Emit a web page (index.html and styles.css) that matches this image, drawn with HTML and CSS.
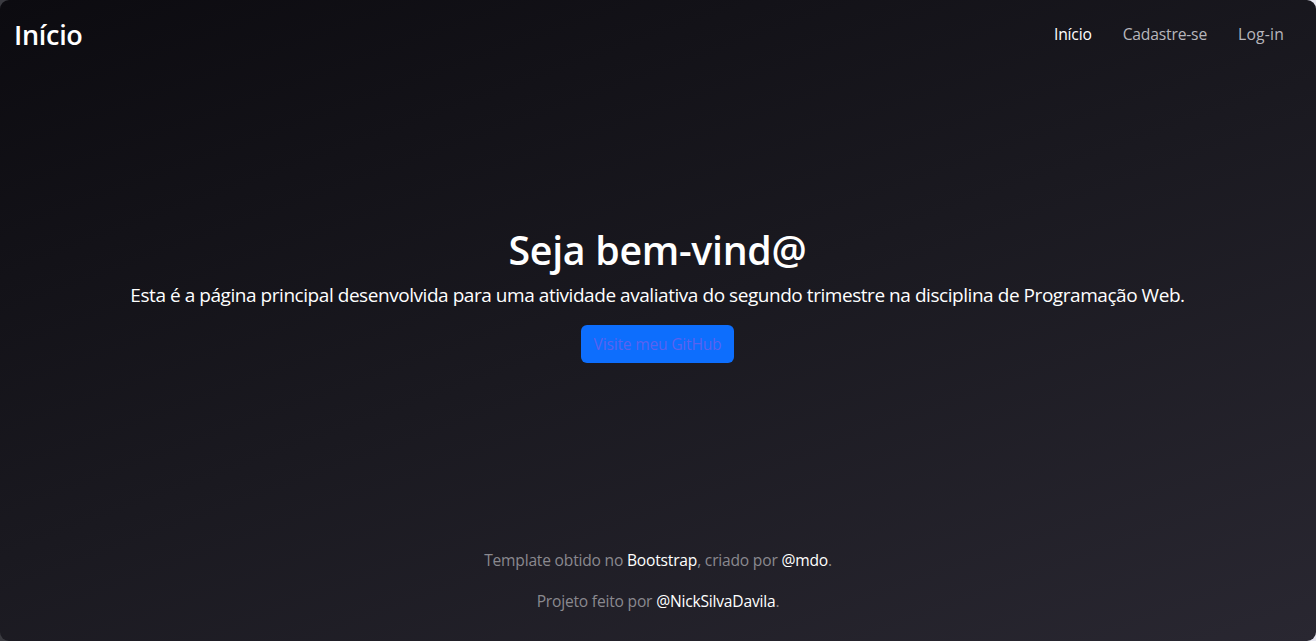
FILE: index.html
```html
<!DOCTYPE html>
<html lang="pt-BR">
<head>
<meta charset="utf-8">
<title>Início</title>
<link rel="stylesheet" href="styles.css">
</head>
<body>
<div class="cover">
  <header class="masthead">
    <h3 class="brand">Início</h3>
    <nav class="nav">
      <a class="nav-link active" href="#">Início</a>
      <a class="nav-link" href="#">Cadastre-se</a>
      <a class="nav-link" href="#">Log-in</a>
    </nav>
  </header>
  <main class="hero">
    <h1 class="title">Seja bem-vind@</h1>
    <p class="lead">Esta é a página principal desenvolvida para uma atividade avaliativa do segundo trimestre na disciplina de Programação Web.</p>
    <a class="btn" href="#">Visite meu GitHub</a>
  </main>
  <footer class="foot">
    <p>Template obtido no <a href="#">Bootstrap</a>, criado por <a href="#">@mdo</a>.</p>
    <p>Projeto feito por <a href="#">@NickSilvaDavila</a>.</p>
  </footer>
</div>
</body>
</html>
```

FILE: styles.css
```css
html, body {
  margin: 0;
  padding: 0;
  height: 100%;
}
body {
  background: linear-gradient(to right, #3a3a40 0%, #e6e6f0 100%);
  font-family: "Open Sans", "Noto Sans", sans-serif;
  color: #fff;
}
.cover {
  box-sizing: border-box;
  height: 100vh;
  border-radius: 9px;
  overflow: hidden;
  background: linear-gradient(160deg, #0c0b10 0%, #1a1920 50%, #292731 100%);
  display: flex;
  flex-direction: column;
  padding: 0 32px 0 14px;
}
.masthead {
  display: flex;
  justify-content: space-between;
  align-items: center;
  height: 68px;
}
.brand {
  margin: 0;
  font-size: 27px;
  font-weight: 600;
  letter-spacing: -0.3px;
}
.nav {
  display: flex;
  gap: 31px;
}
.nav-link {
  color: #b7b6bc;
  text-decoration: none;
  font-size: 15.7px;
  letter-spacing: -0.2px;
}
.nav-link:last-child {
  letter-spacing: 0.2px;
}
.nav-link.active {
  color: #fff;
}
.hero {
  flex: 1;
  display: flex;
  flex-direction: column;
  align-items: center;
  justify-content: center;
  text-align: center;
  padding-bottom: 27px;
  padding-left: 17px;
}
.title {
  margin: 0 0 6px;
  font-size: 39.3px;
  font-weight: 600;
  line-height: 48px;
  letter-spacing: -0.3px;
}
.lead {
  margin: 0 0 15px;
  font-size: 19px;
  font-weight: 400;
  line-height: 30px;
  letter-spacing: -0.45px;
}
.btn {
  display: inline-block;
  background: #0d6efd;
  color: #5a62f0;
  text-decoration: none;
  font-size: 15.6px;
  line-height: 24px;
  padding: 7px 13px;
  border-radius: 6px;
  letter-spacing: -0.2px;
}
.foot {
  text-align: center;
  color: #8a898f;
  font-size: 15.6px;
  padding-bottom: 28px;
  padding-left: 18px;
  letter-spacing: -0.2px;
}
.foot p {
  margin: 0 0 17px;
  line-height: 24px;
}
.foot p:last-child {
  margin-bottom: 0;
}
.foot a {
  color: #fff;
  text-decoration: none;
}
```
